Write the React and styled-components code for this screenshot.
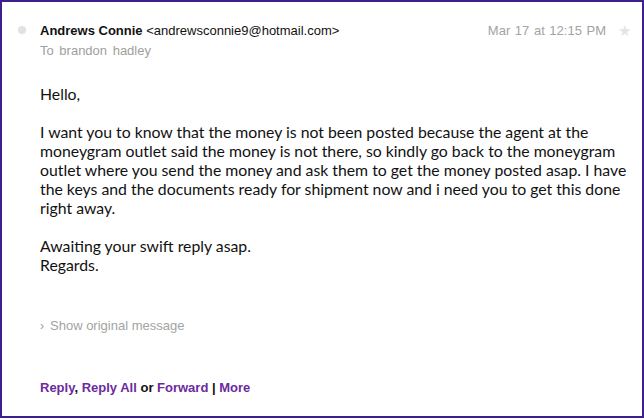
import React from 'react';
import styled, { createGlobalStyle } from 'styled-components';

const GlobalStyle = createGlobalStyle`
  html, body {
    margin: 0;
    padding: 0;
    background: #FFFFFF;
  }
`;

const Frame = styled.div`
  box-sizing: border-box;
  width: 644px;
  height: 418px;
  border: 2px solid #3F1E8E;
  background: #FFFFFF;
  padding: 20px 0 0 16px;
  font-family: "Liberation Sans", Arial, sans-serif;
`;

const Header = styled.div`
  display: flex;
  align-items: flex-start;
`;

const Dot = styled.span`
  width: 8px;
  height: 8px;
  border-radius: 50%;
  background: #E2E2E2;
  margin: 4px 14px 0 0;
  flex-shrink: 0;
`;

const Sender = styled.div`
  flex: 1;
`;

const From = styled.div`
  font-size: 13px;
  line-height: 17px;
  color: #111111;
`;

const Name = styled.b`
  font-weight: bold;
`;

const To = styled.div`
  font-size: 13px;
  line-height: 17px;
  color: #A0A0A0;
  margin-top: 3px;
  word-spacing: 2px;
`;

const Meta = styled.div`
  display: flex;
  align-items: center;
  gap: 12px;
  padding-right: 11px;
  font-size: 13px;
  line-height: 17px;
  color: #A3A3A3;
  word-spacing: 1px;
`;

const Star = styled.span`
  color: #E4E4E4;
  font-size: 15px;
`;

const Body = styled.div`
  padding: 25px 0 0 22px;
  font-family: Lato, "Open Sans", sans-serif;
  font-size: 15.8px;
  line-height: 19px;
  color: #111111;
  white-space: nowrap;
`;

const Para = styled.p`
  margin: 0 0 19px 0;
`;

const ShowOriginal = styled.div`
  margin: 44px 0 0 22px;
  display: flex;
  align-items: center;
  gap: 6px;
  font-size: 13px;
  color: #A3A3A3;
`;

const Chevron = styled.span`
  font-size: 12px;
  color: #999999;
`;

const Actions = styled.div`
  margin: 47px 0 0 22px;
  font-size: 13px;
  font-weight: bold;
  color: #111111;
`;

const Action = styled.a`
  color: #6C2A9E;
  text-decoration: none;
`;

const lines = [
  'I want you to know that the money is not been posted because the agent at the',
  'moneygram outlet said the money is not there, so kindly go back to the moneygram',
  'outlet where you send the money and ask them to get the money posted asap. I have',
  'the keys and the documents ready for shipment now and i need you to get this done',
  'right away.',
];

const App = () => (
  <>
    <GlobalStyle />
    <Frame>
      <Header>
        <Dot />
        <Sender>
          <From>
            <Name>Andrews Connie</Name> &lt;andrewsconnie9@hotmail.com&gt;
          </From>
          <To>To brandon hadley</To>
        </Sender>
        <Meta>
          <span>Mar 17 at 12:15 PM</span>
          <Star>★</Star>
        </Meta>
      </Header>
      <Body>
        <Para>Hello,</Para>
        <Para>
          {lines.map((line, i) => (
            <React.Fragment key={i}>
              {line}
              {i < lines.length - 1 && <br />}
            </React.Fragment>
          ))}
        </Para>
        <Para>
          Awaiting your swift reply asap.
          <br />
          Regards.
        </Para>
      </Body>
      <ShowOriginal>
        <Chevron>›</Chevron>
        Show original message
      </ShowOriginal>
      <Actions>
        <Action href="#">Reply</Action>, <Action href="#">Reply All</Action> or <Action href="#">Forward</Action> | <Action href="#">More</Action>
      </Actions>
    </Frame>
  </>
);

export default App;
